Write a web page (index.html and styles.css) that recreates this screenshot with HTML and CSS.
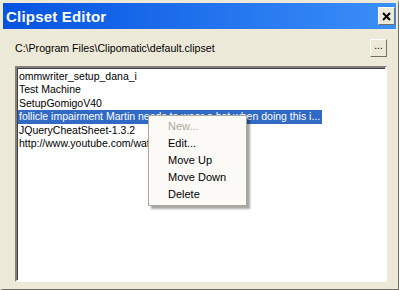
FILE: index.html
```html
<!DOCTYPE html>
<html lang="en">
<head>
  <meta charset="UTF-8">
  <title>Clipset Editor</title>
  <link rel="stylesheet" href="styles.css">
</head>
<body>
  <div class="window">
    <!-- title bar -->
    <div class="titlebar">
      <span class="title">Clipset Editor</span>
      <button class="close-btn">
        <svg width="9" height="9" viewBox="0 0 9 9"><path d="M1 1 L8 8 M8 1 L1 8" stroke="#000" stroke-width="2"/></svg>
      </button>
    </div>

    <div class="content">
      <div class="path-row">
        <span class="path">C:\Program Files\Clipomatic\default.clipset</span>
        <button class="browse-btn">...</button>
      </div>

      <div class="listbox">
        <div class="item">ommwriter_setup_dana_i</div>
        <div class="item">Test Machine</div>
        <div class="item">SetupGomigoV40</div>
        <div class="item selected">follicle impairment Martin needs to wear a hat when doing this i...</div>
        <div class="item">JQueryCheatSheet-1.3.2</div>
        <div class="item">http://www.youtube.com/watch?v=k3yPzr6Ch2o)</div>

        <!-- context menu -->
        <div class="context-menu">
          <div class="menu-item disabled">New...</div>
          <div class="menu-item">Edit...</div>
          <div class="menu-item">Move Up</div>
          <div class="menu-item">Move Down</div>
          <div class="menu-item">Delete</div>
        </div>
      </div>
    </div>
  </div>
</body>
</html>
```

FILE: styles.css
```css
body { margin: 0; font-family: 'Liberation Sans', Arial, sans-serif; font-size: 11px; color: #000; background: #ece9d8; }
.window { width: 399px; height: 290px; box-sizing: border-box; background: #ece9d8; border-top: 3px solid #ece9d8; border-left: 3px solid #ece9d8; border-right: 1px solid #716f64; border-bottom: 1px solid #716f64; box-shadow: inset -2px -2px 0 #ece9d8; display: flex; flex-direction: column; }
.titlebar { height: 26px; margin-right: 2px; background: linear-gradient(to right, #0553e1, #3b8ff8); display: flex; align-items: center; justify-content: space-between; padding: 0 1px 0 3px; }
.title { color: #fff; font-weight: bold; font-size: 15px; letter-spacing: 0.2px; }
.close-btn { width: 17px; height: 18px; padding: 0; background: #ece9d8; border: 1px solid; border-color: #fff #716f64 #716f64 #fff; display: flex; align-items: center; justify-content: center; }
.content { flex: 1; display: flex; flex-direction: column; padding: 10px 11px 7px 12px; }
.path-row { display: flex; align-items: center; justify-content: space-between; height: 18px; margin-bottom: 9px; }
.path { font-size: 10.6px; }
.browse-btn { width: 17px; height: 18px; padding: 0 0 4px; font-size: 10px; font-family: 'Liberation Sans', Arial, sans-serif; background: #ece9d8; border: 1px solid; border-color: #fff #716f64 #716f64 #fff; line-height: 10px; }
.listbox { flex: 1; position: relative; background: #fff; border: 2px solid; border-color: #808080 #fff #fff #808080; box-shadow: inset 1px 1px 0 #404040; padding: 2px 1px; }
.item { height: 13.4px; line-height: 13px; padding-left: 1px; white-space: nowrap; font-size: 10.5px; }
.item.selected { background: #316ac5; color: #fff; display: inline-block; padding-right: 2px; }
.context-menu { position: absolute; left: 131px; top: 47px; width: 97px; background: #fbfaf6; border: 1px solid #aca899; box-shadow: 3px 3px 2px rgba(0,0,0,0.35); padding: 2px 0; }
.menu-item { height: 17px; line-height: 17px; padding-left: 19px; font-size: 11px; }
.menu-item.disabled { color: #aca899; }
```
